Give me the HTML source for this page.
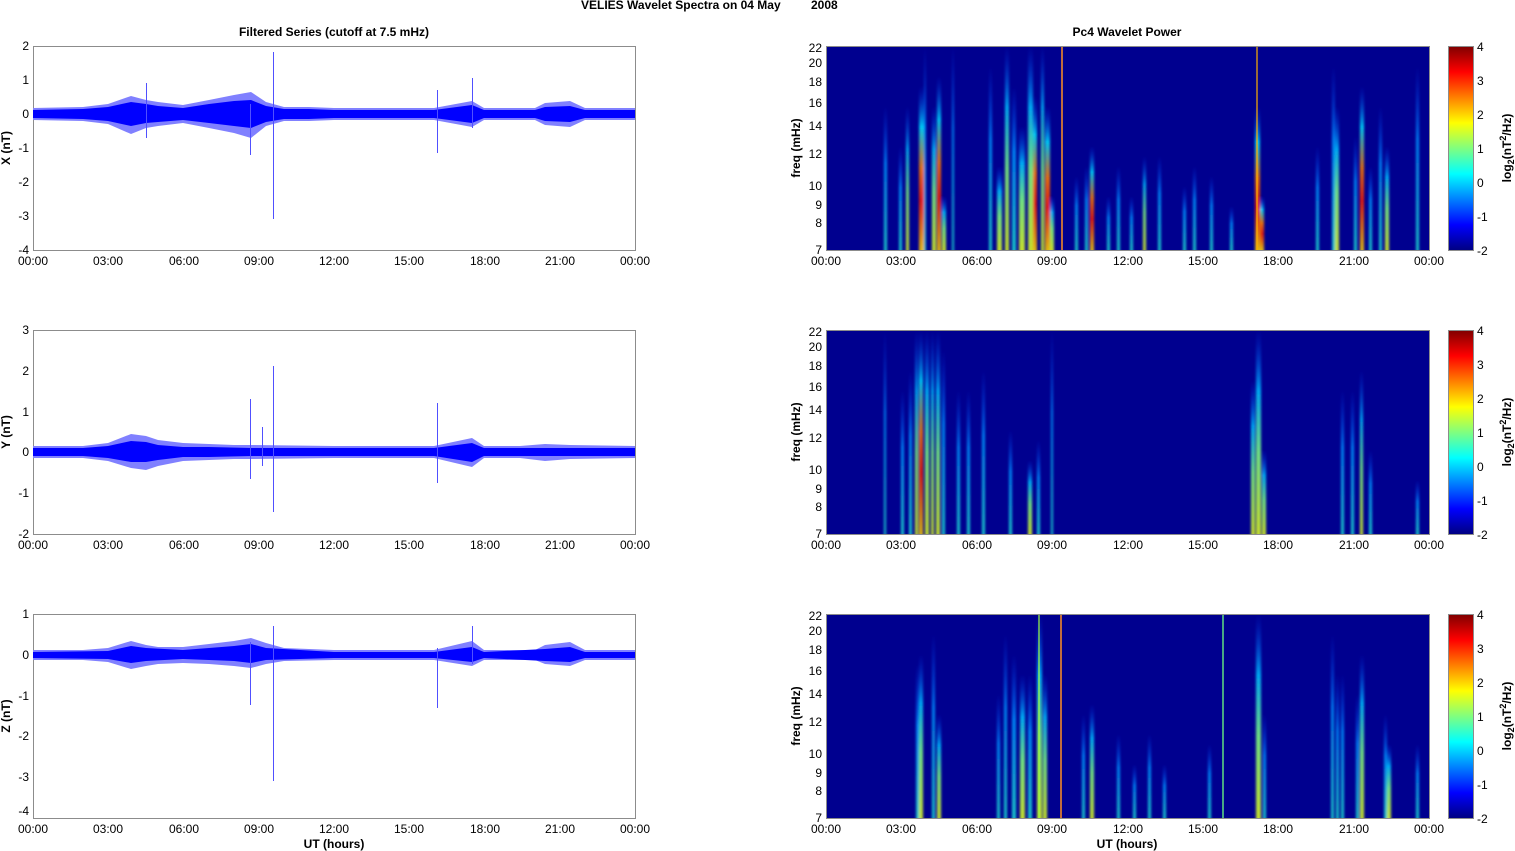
<!DOCTYPE html>
<html><head><meta charset="utf-8"><style>
body{margin:0;background:#fff;width:1515px;height:851px;overflow:hidden}
svg{display:block;font-family:"Liberation Sans",Arial,sans-serif;font-size:12px}
.b{font-weight:bold}
</style></head><body>
<svg width="1515" height="851" viewBox="0 0 1515 851" xmlns="http://www.w3.org/2000/svg">
<defs>
<linearGradient id="gC" x1="0" y1="0" x2="0" y2="1"><stop offset="0" stop-color="#0040ff" stop-opacity="0"/><stop offset=".4" stop-color="#0090ff"/><stop offset="1" stop-color="#20e0d0"/></linearGradient>
<linearGradient id="gY" x1="0" y1="0" x2="0" y2="1"><stop offset="0" stop-color="#0040ff" stop-opacity="0"/><stop offset=".3" stop-color="#00c0ff"/><stop offset=".6" stop-color="#80ff80"/><stop offset="1" stop-color="#e0ff20"/></linearGradient>
<linearGradient id="gR" x1="0" y1="0" x2="0" y2="1"><stop offset="0" stop-color="#0040ff" stop-opacity="0"/><stop offset=".25" stop-color="#00e0ff"/><stop offset=".5" stop-color="#ff8000"/><stop offset=".7" stop-color="#ff2000"/><stop offset="1" stop-color="#ffd000"/></linearGradient>
<linearGradient id="jet" x1="0" y1="0" x2="0" y2="1"><stop offset="0" stop-color="#800000"/><stop offset=".125" stop-color="#ff0000"/><stop offset=".375" stop-color="#ffff00"/><stop offset=".625" stop-color="#00ffff"/><stop offset=".875" stop-color="#0000ff"/><stop offset="1" stop-color="#000080"/></linearGradient>
<filter id="bl" filterUnits="userSpaceOnUse" x="-10" y="-10" width="640" height="230"><feGaussianBlur stdDeviation="1.2 0"/></filter>
<clipPath id="cp"><rect x="0" y="0" width="603" height="204"/></clipPath>
</defs>

<text x="581" y="9" class="b">VELIES Wavelet Spectra on 04 May</text><text x="811" y="9" class="b">2008</text>
<text x="334" y="36" class="b" text-anchor="middle">Filtered Series (cutoff at 7.5 mHz)</text>
<text x="1127" y="36" class="b" text-anchor="middle">Pc4 Wavelet Power</text>
<text x="334" y="848" class="b" text-anchor="middle">UT (hours)</text>
<text x="1127" y="848" class="b" text-anchor="middle">UT (hours)</text>

<!-- ===== LEFT PANEL 1 (X) ===== -->
<g>
<rect x="33.5" y="46.5" width="602" height="204" fill="#fff" stroke="#8c8c8c"/>
<polygon fill="#8080ff" points="33,108 83,107 108,104 131,96 146,100 158,102 183,105 209,100 234,95 251,92 266,102 284,107 309,107 334,108 434,108 472,101 484,108 535,108 545,103 570,101 585,108 635,108 635,120 585,120 570,127 545,125 535,120 484,120 472,127 434,120 334,120 309,121 284,121 266,126 251,138 234,133 209,128 183,123 158,126 146,128 131,134 108,124 83,121 33,120"/>
<polygon fill="#0000ff" points="33,110 83,109 108,107 131,102 146,104 158,106 183,108 209,104 234,101 251,100 266,106 284,109 309,109 334,110 434,110 472,105 484,110 535,110 545,107 570,106 585,110 635,110 635,118 585,118 570,122 545,121 535,118 484,118 472,123 434,118 334,118 309,119 284,119 266,122 251,128 234,126 209,123 183,120 158,122 146,123 131,126 108,121 83,119 33,118"/>
<g stroke="#5050ff" stroke-width="1"><line x1="146.5" y1="83" x2="146.5" y2="138"/><line x1="250.5" y1="104" x2="250.5" y2="155"/><line x1="273.5" y1="52" x2="273.5" y2="219"/><line x1="437.5" y1="90" x2="437.5" y2="153"/><line x1="472.5" y1="78" x2="472.5" y2="128"/></g>
<g fill="#000" text-anchor="end"><text x="29" y="50">2</text><text x="29" y="84">1</text><text x="29" y="118">0</text><text x="29" y="152">-1</text><text x="29" y="186">-2</text><text x="29" y="220">-3</text><text x="29" y="254">-4</text></g>
<g text-anchor="middle"><text x="33" y="265">00:00</text><text x="108" y="265">03:00</text><text x="184" y="265">06:00</text><text x="259" y="265">09:00</text><text x="334" y="265">12:00</text><text x="409" y="265">15:00</text><text x="485" y="265">18:00</text><text x="560" y="265">21:00</text><text x="635" y="265">00:00</text></g>
<text class="b" transform="rotate(-90 10 148)" x="10" y="148" text-anchor="middle">X (nT)</text>
</g>

<!-- ===== LEFT PANEL 2 (Y) ===== -->
<g>
<rect x="33.5" y="330.5" width="602" height="204" fill="#fff" stroke="#8c8c8c"/>
<polygon fill="#8080ff" points="33,446 83,446 108,443 131,434 146,436 158,440 183,443 209,444 234,445 251,445 334,446 434,446 472,438 484,446 520,446 545,444 570,445 635,446 635,458 570,459 545,461 520,458 484,458 472,467 434,458 334,458 251,459 234,459 209,460 183,461 158,466 146,470 131,468 108,461 83,458 33,458"/>
<polygon fill="#0000ff" points="33,448 83,448 108,446 131,441 146,442 158,445 183,447 209,447 251,448 334,448 434,448 472,443 484,448 635,448 635,456 484,456 472,462 434,456 334,456 251,456 209,457 183,457 158,460 146,462 131,462 108,458 83,456 33,456"/>
<g stroke="#5050ff"><line x1="250.5" y1="399" x2="250.5" y2="479"/><line x1="273.5" y1="366" x2="273.5" y2="512"/><line x1="437.5" y1="403" x2="437.5" y2="483"/><line x1="262.5" y1="427" x2="262.5" y2="466"/></g>
<g text-anchor="end"><text x="29" y="334">3</text><text x="29" y="375">2</text><text x="29" y="416">1</text><text x="29" y="456">0</text><text x="29" y="497">-1</text><text x="29" y="538">-2</text></g>
<g text-anchor="middle"><text x="33" y="549">00:00</text><text x="108" y="549">03:00</text><text x="184" y="549">06:00</text><text x="259" y="549">09:00</text><text x="334" y="549">12:00</text><text x="409" y="549">15:00</text><text x="485" y="549">18:00</text><text x="560" y="549">21:00</text><text x="635" y="549">00:00</text></g>
<text class="b" transform="rotate(-90 10 432)" x="10" y="432" text-anchor="middle">Y (nT)</text>
</g>

<!-- ===== LEFT PANEL 3 (Z) ===== -->
<g>
<rect x="33.5" y="614.5" width="602" height="204" fill="#fff" stroke="#8c8c8c"/>
<polygon fill="#8080ff" points="33,650 83,650 108,648 131,641 146,645 158,647 183,647 209,644 234,641 251,638 266,643 284,648 334,650 434,650 472,641 484,650 535,650 545,645 570,642 585,650 635,650 635,660 585,660 570,666 545,664 535,660 484,660 472,666 434,660 334,660 284,661 266,664 251,668 234,666 209,664 183,663 158,664 146,666 131,669 108,662 83,660 33,660"/>
<polygon fill="#0000ff" points="33,652 108,651 131,646 146,648 183,650 209,648 234,646 251,644 266,648 334,652 434,652 472,647 484,652 545,649 570,647 585,652 635,652 635,658 585,658 570,662 545,661 484,658 472,662 434,658 334,658 266,660 251,663 234,661 209,660 183,659 146,661 131,663 108,659 33,658"/>
<g stroke="#5050ff"><line x1="250.5" y1="642" x2="250.5" y2="705"/><line x1="273.5" y1="626" x2="273.5" y2="781"/><line x1="437.5" y1="648" x2="437.5" y2="708"/><line x1="472.5" y1="626" x2="472.5" y2="664"/></g>
<g text-anchor="end"><text x="29" y="618">1</text><text x="29" y="659">0</text><text x="29" y="700">-1</text><text x="29" y="740">-2</text><text x="29" y="781">-3</text><text x="29" y="815">-4</text></g>
<g text-anchor="middle"><text x="33" y="833">00:00</text><text x="108" y="833">03:00</text><text x="184" y="833">06:00</text><text x="259" y="833">09:00</text><text x="334" y="833">12:00</text><text x="409" y="833">15:00</text><text x="485" y="833">18:00</text><text x="560" y="833">21:00</text><text x="635" y="833">00:00</text></g>
<text class="b" transform="rotate(-90 10 716)" x="10" y="716" text-anchor="middle">Z (nT)</text>
</g>

<!-- ===== RIGHT PANEL 1 ===== -->
<g transform="translate(826,46)">
<rect width="603" height="204" fill="#00008f"/>
<g clip-path="url(#cp)"><g filter="url(#bl)" opacity=".88">
<rect x="58" y="60" width="3" height="144" fill="url(#gC)"/><rect x="73" y="100" width="3" height="104" fill="url(#gC)"/><rect x="80" y="60" width="3" height="144" fill="url(#gY)"/><rect x="93" y="40" width="5" height="164" fill="url(#gR)"/><rect x="98" y="0" width="2" height="204" fill="url(#gC)"/><rect x="106" y="60" width="4" height="144" fill="url(#gY)"/><rect x="111" y="30" width="4" height="174" fill="url(#gR)"/><rect x="116" y="150" width="4" height="54" fill="url(#gY)"/><rect x="126" y="0" width="2" height="204" fill="url(#gC)"/>
<rect x="163" y="20" width="3" height="184" fill="url(#gC)"/><rect x="171" y="120" width="5" height="84" fill="url(#gY)"/><rect x="179" y="0" width="4" height="204" fill="url(#gY)"/><rect x="186" y="40" width="4" height="164" fill="url(#gC)"/><rect x="193" y="80" width="6" height="124" fill="url(#gY)"/><rect x="202" y="0" width="5" height="204" fill="url(#gY)"/><rect x="207" y="50" width="4" height="154" fill="url(#gR)"/><rect x="215" y="0" width="3" height="204" fill="url(#gY)"/><rect x="219" y="60" width="5" height="144" fill="url(#gR)"/><rect x="224" y="150" width="4" height="54" fill="url(#gY)"/>
<rect x="249" y="130" width="3" height="74" fill="url(#gC)"/><rect x="259" y="120" width="3" height="84" fill="url(#gC)"/><rect x="264" y="100" width="4" height="104" fill="url(#gR)"/><rect x="281" y="150" width="3" height="54" fill="url(#gC)"/><rect x="291" y="120" width="3" height="84" fill="url(#gC)"/><rect x="304" y="150" width="3" height="54" fill="url(#gC)"/><rect x="317" y="110" width="3" height="94" fill="url(#gY)"/><rect x="332" y="110" width="3" height="94" fill="url(#gC)"/><rect x="357" y="140" width="3" height="64" fill="url(#gC)"/><rect x="367" y="120" width="3" height="84" fill="url(#gC)"/><rect x="384" y="130" width="3" height="74" fill="url(#gC)"/><rect x="404" y="160" width="3" height="44" fill="url(#gC)"/>
<rect x="429" y="60" width="5" height="144" fill="url(#gR)"/><rect x="434" y="150" width="4" height="54" fill="url(#gR)"/>
<rect x="490" y="100" width="3" height="104" fill="url(#gC)"/><rect x="506" y="20" width="3" height="184" fill="url(#gC)"/><rect x="509" y="60" width="4" height="144" fill="url(#gY)"/><rect x="528" y="90" width="3" height="114" fill="url(#gC)"/><rect x="534" y="40" width="4" height="164" fill="url(#gR)"/><rect x="543" y="120" width="3" height="84" fill="url(#gC)"/><rect x="553" y="60" width="3" height="144" fill="url(#gC)"/><rect x="559" y="100" width="4" height="104" fill="url(#gY)"/><rect x="590" y="20" width="3" height="184" fill="url(#gC)"/>
</g>
<line x1="236" y1="0" x2="236" y2="204" stroke="#ff9020" stroke-width="1.5"/><line x1="431" y1="0" x2="431" y2="204" stroke="#ffb000" stroke-width="1.2"/>
</g>
<rect x=".5" y=".5" width="603" height="204" fill="none" stroke="#8c8c8c"/>
<g fill="#000" text-anchor="end"><text x="-4" y="208">7</text><text x="-4" y="181">8</text><text x="-4" y="163">9</text><text x="-4" y="144">10</text><text x="-4" y="112">12</text><text x="-4" y="84">14</text><text x="-4" y="61">16</text><text x="-4" y="40">18</text><text x="-4" y="21">20</text><text x="-4" y="6">22</text></g>
<g text-anchor="middle"><text x="0" y="219">00:00</text><text x="75" y="219">03:00</text><text x="151" y="219">06:00</text><text x="226" y="219">09:00</text><text x="302" y="219">12:00</text><text x="377" y="219">15:00</text><text x="452" y="219">18:00</text><text x="528" y="219">21:00</text><text x="603" y="219">00:00</text></g>
<text class="b" transform="rotate(-90 -26 102)" x="-26" y="102" text-anchor="middle">freq (mHz)</text>
<rect x="622.5" y=".5" width="25" height="204" fill="url(#jet)" stroke="#8c8c8c"/>
<g><text x="651" y="5">4</text><text x="651" y="39">3</text><text x="651" y="73">2</text><text x="651" y="107">1</text><text x="651" y="141">0</text><text x="651" y="175">-1</text><text x="651" y="209">-2</text></g>
<text class="b" transform="rotate(-90 685 102)" x="685" y="102" text-anchor="middle">log<tspan font-size="9" dy="3">2</tspan><tspan dy="-3">(nT</tspan><tspan font-size="9" dy="-5">2</tspan><tspan dy="5">/Hz)</tspan></text>
</g>

<!-- ===== RIGHT PANEL 2 ===== -->
<g transform="translate(826,330)">
<rect width="603" height="204" fill="#00008f"/>
<g clip-path="url(#cp)"><g filter="url(#bl)" opacity=".88">
<rect x="58" y="0" width="2" height="204" fill="url(#gC)"/><rect x="75" y="60" width="3" height="144" fill="url(#gC)"/><rect x="83" y="40" width="3" height="164" fill="url(#gC)"/><rect x="89" y="0" width="3" height="204" fill="url(#gY)"/><rect x="93" y="0" width="4" height="204" fill="url(#gR)"/><rect x="99" y="0" width="4" height="204" fill="url(#gY)"/><rect x="105" y="0" width="3" height="204" fill="url(#gY)"/><rect x="110" y="0" width="4" height="204" fill="url(#gY)"/><rect x="116" y="20" width="3" height="184" fill="url(#gC)"/>
<rect x="131" y="60" width="3" height="144" fill="url(#gC)"/><rect x="141" y="60" width="3" height="144" fill="url(#gC)"/><rect x="156" y="40" width="3" height="164" fill="url(#gC)"/><rect x="183" y="100" width="3" height="104" fill="url(#gC)"/><rect x="202" y="130" width="4" height="74" fill="url(#gY)"/><rect x="211" y="110" width="3" height="94" fill="url(#gC)"/><rect x="225" y="0" width="2" height="204" fill="url(#gC)"/>
<rect x="425" y="50" width="4" height="154" fill="url(#gY)"/><rect x="430" y="0" width="5" height="204" fill="url(#gY)"/><rect x="436" y="120" width="4" height="84" fill="url(#gY)"/>
<rect x="515" y="60" width="3" height="144" fill="url(#gC)"/><rect x="525" y="60" width="3" height="144" fill="url(#gC)"/><rect x="534" y="40" width="3" height="164" fill="url(#gY)"/><rect x="543" y="120" width="3" height="84" fill="url(#gC)"/><rect x="590" y="150" width="3" height="54" fill="url(#gC)"/>
</g></g>
<rect x=".5" y=".5" width="603" height="204" fill="none" stroke="#8c8c8c"/>
<g text-anchor="end"><text x="-4" y="208">7</text><text x="-4" y="181">8</text><text x="-4" y="163">9</text><text x="-4" y="144">10</text><text x="-4" y="112">12</text><text x="-4" y="84">14</text><text x="-4" y="61">16</text><text x="-4" y="40">18</text><text x="-4" y="21">20</text><text x="-4" y="6">22</text></g>
<g text-anchor="middle"><text x="0" y="219">00:00</text><text x="75" y="219">03:00</text><text x="151" y="219">06:00</text><text x="226" y="219">09:00</text><text x="302" y="219">12:00</text><text x="377" y="219">15:00</text><text x="452" y="219">18:00</text><text x="528" y="219">21:00</text><text x="603" y="219">00:00</text></g>
<text class="b" transform="rotate(-90 -26 102)" x="-26" y="102" text-anchor="middle">freq (mHz)</text>
<rect x="622.5" y=".5" width="25" height="204" fill="url(#jet)" stroke="#8c8c8c"/>
<g><text x="651" y="5">4</text><text x="651" y="39">3</text><text x="651" y="73">2</text><text x="651" y="107">1</text><text x="651" y="141">0</text><text x="651" y="175">-1</text><text x="651" y="209">-2</text></g>
<text class="b" transform="rotate(-90 685 102)" x="685" y="102" text-anchor="middle">log<tspan font-size="9" dy="3">2</tspan><tspan dy="-3">(nT</tspan><tspan font-size="9" dy="-5">2</tspan><tspan dy="5">/Hz)</tspan></text>
</g>

<!-- ===== RIGHT PANEL 3 ===== -->
<g transform="translate(826,614)">
<rect width="603" height="204" fill="#00008f"/>
<g clip-path="url(#cp)"><g filter="url(#bl)" opacity=".88">
<rect x="90" y="50" width="3" height="154" fill="url(#gC)"/><rect x="93" y="40" width="4" height="164" fill="url(#gY)"/><rect x="106" y="20" width="3" height="184" fill="url(#gC)"/><rect x="111" y="100" width="4" height="104" fill="url(#gY)"/>
<rect x="171" y="80" width="3" height="124" fill="url(#gC)"/><rect x="178" y="20" width="3" height="184" fill="url(#gC)"/><rect x="186" y="40" width="4" height="164" fill="url(#gC)"/><rect x="194" y="60" width="5" height="144" fill="url(#gY)"/><rect x="202" y="60" width="4" height="144" fill="url(#gC)"/><rect x="211" y="0" width="5" height="204" fill="url(#gY)"/><rect x="217" y="60" width="4" height="144" fill="url(#gY)"/>
<rect x="256" y="100" width="3" height="104" fill="url(#gC)"/><rect x="264" y="90" width="4" height="114" fill="url(#gY)"/><rect x="291" y="120" width="3" height="84" fill="url(#gC)"/><rect x="307" y="150" width="3" height="54" fill="url(#gC)"/><rect x="322" y="120" width="3" height="84" fill="url(#gC)"/><rect x="337" y="150" width="3" height="54" fill="url(#gC)"/><rect x="382" y="130" width="3" height="74" fill="url(#gC)"/>
<rect x="430" y="0" width="5" height="204" fill="url(#gY)"/><rect x="437" y="100" width="3" height="104" fill="url(#gC)"/>
<rect x="505" y="20" width="3" height="184" fill="url(#gC)"/><rect x="510" y="60" width="3" height="144" fill="url(#gC)"/><rect x="515" y="60" width="3" height="144" fill="url(#gC)"/><rect x="530" y="80" width="3" height="124" fill="url(#gC)"/><rect x="534" y="40" width="4" height="164" fill="url(#gY)"/><rect x="558" y="100" width="3" height="104" fill="url(#gC)"/><rect x="561" y="130" width="4" height="74" fill="url(#gY)"/><rect x="590" y="130" width="3" height="74" fill="url(#gC)"/>
</g>
<line x1="213" y1="0" x2="213" y2="204" stroke="#a0ff40" stroke-width="1.2"/><line x1="235" y1="0" x2="235" y2="204" stroke="#ff9020" stroke-width="1.5"/><line x1="397" y1="0" x2="397" y2="204" stroke="#60e080" stroke-width="1.5"/>
</g>
<rect x=".5" y=".5" width="603" height="204" fill="none" stroke="#8c8c8c"/>
<g text-anchor="end"><text x="-4" y="208">7</text><text x="-4" y="181">8</text><text x="-4" y="163">9</text><text x="-4" y="144">10</text><text x="-4" y="112">12</text><text x="-4" y="84">14</text><text x="-4" y="61">16</text><text x="-4" y="40">18</text><text x="-4" y="21">20</text><text x="-4" y="6">22</text></g>
<g text-anchor="middle"><text x="0" y="219">00:00</text><text x="75" y="219">03:00</text><text x="151" y="219">06:00</text><text x="226" y="219">09:00</text><text x="302" y="219">12:00</text><text x="377" y="219">15:00</text><text x="452" y="219">18:00</text><text x="528" y="219">21:00</text><text x="603" y="219">00:00</text></g>
<text class="b" transform="rotate(-90 -26 102)" x="-26" y="102" text-anchor="middle">freq (mHz)</text>
<rect x="622.5" y=".5" width="25" height="204" fill="url(#jet)" stroke="#8c8c8c"/>
<g><text x="651" y="5">4</text><text x="651" y="39">3</text><text x="651" y="73">2</text><text x="651" y="107">1</text><text x="651" y="141">0</text><text x="651" y="175">-1</text><text x="651" y="209">-2</text></g>
<text class="b" transform="rotate(-90 685 102)" x="685" y="102" text-anchor="middle">log<tspan font-size="9" dy="3">2</tspan><tspan dy="-3">(nT</tspan><tspan font-size="9" dy="-5">2</tspan><tspan dy="5">/Hz)</tspan></text>
</g>
</svg>
</body></html>
